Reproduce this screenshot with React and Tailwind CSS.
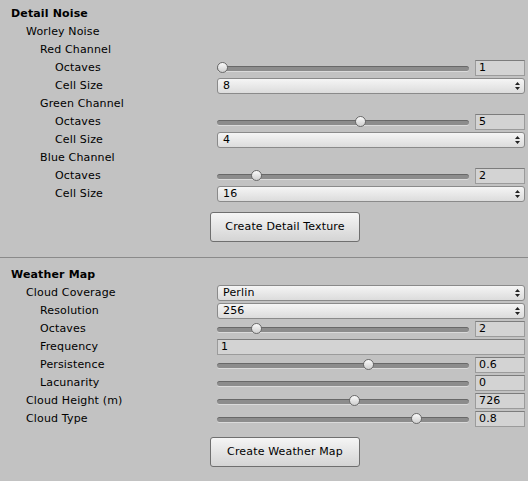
import React from 'react';

const indents = ['pl-[11px]', 'pl-[26px]', 'pl-[40px]', 'pl-[55px]'];

function Row({ level = 0, label, bold, children }) {
  return (
    <div className="flex h-[18px] items-center pr-[3px]">
      <div className={`w-[217px] shrink-0 whitespace-nowrap ${indents[level]} ${bold ? 'font-bold' : ''}`}>
        {label}
      </div>
      {children && <div className="flex flex-1 items-center min-w-0">{children}</div>}
    </div>
  );
}

function Slider({ value, frac }) {
  return (
    <>
      <div className="relative flex-1 h-[18px] flex items-center">
        <div className="w-full h-[5px] rounded-full bg-[#8c8c8c] border-t border-[#686868] shadow-[0_1px_0_#dadada]" />
        {frac != null && (
          <div
            className="absolute top-[3px] w-[11px] h-[11px] rounded-full border border-[#6a6a6a] bg-linear-to-b from-[#fafafa] to-[#cfcfcf]"
            style={{ left: `calc(${frac} * (100% - 11px))` }}
          />
        )}
      </div>
      <div className="ml-[6px] w-[50px] h-[16px] shrink-0 bg-[#d3d3d3] border border-[#9b9b9b] border-t-[#7c7c7c] pl-[3px] leading-[14px]">
        {value}
      </div>
    </>
  );
}

function Popup({ value }) {
  return (
    <div className="flex-1 h-[16px] rounded-[3px] border border-[#8a8a8a] bg-linear-to-b from-[#f5f5f5] to-[#dcdcdc] pl-[5px] pr-[4px] flex items-center justify-between leading-[14px]">
      <span>{value}</span>
      <svg width="5" height="8" viewBox="0 0 5 8" className="shrink-0">
        <path d="M2.5 0 L5 3 L0 3 Z M0 5 L5 5 L2.5 8 Z" fill="#222" />
      </svg>
    </div>
  );
}

function TextField({ value }) {
  return (
    <div className="flex-1 h-[16px] bg-[#d3d3d3] border border-[#9b9b9b] border-t-[#7c7c7c] pl-[3px] leading-[14px]">
      {value}
    </div>
  );
}

function Button({ children }) {
  return (
    <div className="ml-[210px] w-[150px] h-[30px] rounded-[3px] border border-[#6f6f6f] bg-linear-to-b from-[#f5f5f5] to-[#d4d4d4] flex items-center justify-center">
      {children}
    </div>
  );
}

export default function App() {
  return (
    <div className="w-[528px] h-[481px] bg-[#c2c2c2] text-black text-[11px] tracking-[0.15px] font-['DejaVu_Sans',sans-serif] pt-[5px] overflow-hidden">
      <Row label="Detail Noise" bold />
      <Row level={1} label="Worley Noise" />
      <Row level={2} label="Red Channel" />
      <Row level={3} label="Octaves"><Slider value="1" frac={0} /></Row>
      <Row level={3} label="Cell Size"><Popup value="8" /></Row>
      <Row level={2} label="Green Channel" />
      <Row level={3} label="Octaves"><Slider value="5" frac={4 / 7} /></Row>
      <Row level={3} label="Cell Size"><Popup value="4" /></Row>
      <Row level={2} label="Blue Channel" />
      <Row level={3} label="Octaves"><Slider value="2" frac={1 / 7} /></Row>
      <Row level={3} label="Cell Size"><Popup value="16" /></Row>

      <div className="mt-[9px]">
        <Button>Create Detail Texture</Button>
      </div>

      <div className="mt-[15px] h-px bg-[#8a8a8a]" />

      <div className="mt-[8px]">
        <Row label="Weather Map" bold />
        <Row level={1} label="Cloud Coverage"><Popup value="Perlin" /></Row>
        <Row level={2} label="Resolution"><Popup value="256" /></Row>
        <Row level={2} label="Octaves"><Slider value="2" frac={1 / 7} /></Row>
        <Row level={2} label="Frequency"><TextField value="1" /></Row>
        <Row level={2} label="Persistence"><Slider value="0.6" frac={0.605} /></Row>
        <Row level={2} label="Lacunarity"><Slider value="0" /></Row>
        <Row level={1} label="Cloud Height (m)"><Slider value="726" frac={0.546} /></Row>
        <Row level={1} label="Cloud Type"><Slider value="0.8" frac={0.807} /></Row>
      </div>

      <div className="mt-[9px]">
        <Button>Create Weather Map</Button>
      </div>
    </div>
  );
}
